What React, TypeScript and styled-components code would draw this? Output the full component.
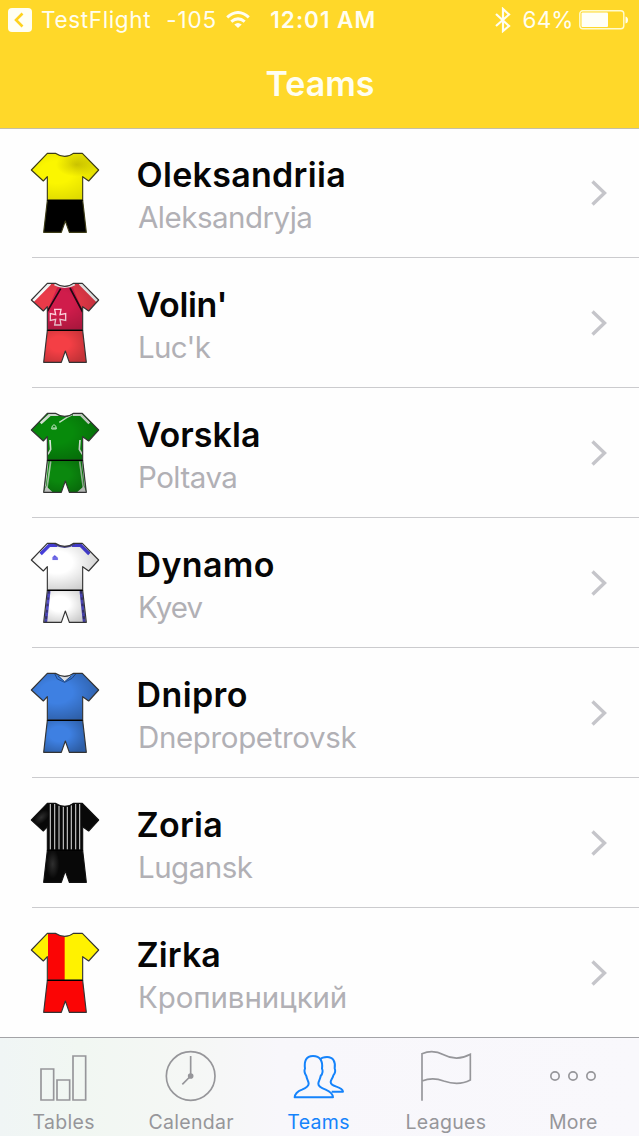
import React from 'react';
import styled, { createGlobalStyle } from 'styled-components';

const GlobalStyle = createGlobalStyle`
  * { box-sizing: border-box; }
  body { margin: 0; background: #fff; font-family: Inter, "Liberation Sans", sans-serif; }
`;

const Screen = styled.div`
  width: 639px;
  height: 1136px;
  display: flex;
  flex-direction: column;
  overflow: hidden;
  background: #fefefe;
`;

const Header = styled.header`
  flex: none;
  height: 129px;
  background: #ffd829;
  border-bottom: 1px solid #c4bfa6;
  color: #fffef0;
`;

const StatusBar = styled.div`
  height: 40px;
  display: flex;
  align-items: center;
  padding-left: 8px;
`;

const StatusText = styled.span<{ $left: number; $spacing: number; $weight?: number }>`
  margin-left: ${(p) => p.$left}px;
  font-size: 22.5px;
  font-weight: ${(p) => p.$weight ?? 400};
  letter-spacing: ${(p) => p.$spacing}px;
  line-height: 42px;
  white-space: nowrap;
`;

const StatusGlyph = styled.svg<{ $left?: number }>`
  flex: none;
  display: block;
  margin-left: ${(p) => p.$left ?? 0}px;
`;

const StatusEnd = styled.div`
  margin-left: auto;
  padding-right: 10px;
  display: flex;
  align-items: center;
`;

const Title = styled.h1`
  margin: 0;
  height: 88px;
  padding-left: 1px;
  line-height: 87px;
  text-align: center;
  font-size: 34px;
  font-weight: 600;
`;

const List = styled.ul`
  flex: 1;
  min-height: 0;
  margin: 0;
  padding: 0;
  list-style: none;
  overflow: hidden;
`;

const Row = styled.li`
  height: 130px;
  margin-left: 32px;
  display: flex;
  align-items: flex-start;
  border-bottom: 1px solid #cbcbce;
  &:first-child { height: 129px; }
  &:first-child > * { margin-top: -1px; }
`;

const KitCell = styled.div`
  width: 105px;
  padding-top: 24px;
  margin-left: -2px;
  svg { display: block; }
`;

const Labels = styled.div`
  flex: 1;
  padding: 25px 0 0 1.5px;
`;

const Name = styled.div<{ $spacing: number }>`
  height: 43px;
  line-height: 44px;
  font-size: 34px;
  font-weight: 600;
  color: #060606;
  white-space: nowrap;
  letter-spacing: ${(p) => p.$spacing}px;
`;

const City = styled.div<{ $spacing: number }>`
  height: 42px;
  line-height: 42px;
  padding-left: 1.5px;
  font-size: 29.5px;
  font-weight: 400;
  color: #b1b0b5;
  white-space: nowrap;
  letter-spacing: ${(p) => p.$spacing}px;
`;

const Chevron = styled.svg`
  flex: none;
  display: block;
  padding-top: 51px;
  box-sizing: content-box;
  margin-right: 31px;
`;

const TabBar = styled.nav`
  flex: none;
  height: 99px;
  display: flex;
  padding-right: 2px;
  border-top: 1px solid #a3a3a7;
  background: linear-gradient(90deg, #f0f5f5 0, #f1f7f2 80px, #f5f7f5 190px, #f8f7fb 280px, #f9f8fc 100%);
`;

const Tab = styled.div<{ $active?: boolean }>`
  flex: 1;
  display: flex;
  flex-direction: column;
  align-items: center;
  padding-top: 11px;
  color: ${(p) => (p.$active ? '#1583fb' : '#96969a')};
  svg { display: block; flex: none; }
`;

const TabLabel = styled.span<{ $spacing: number }>`
  flex: none;
  height: 33px;
  line-height: 38px;
  font-size: 19.5px;
  font-weight: 400;
  letter-spacing: ${(p) => p.$spacing}px;
  white-space: nowrap;
`;

const SHIRT =
  'M82 40 L106 40 Q119 49 134 49 Q149 49 160 40 L187 40 L236 90 L206 123 L188 110 L188 181 L82 181 L82 110 L70 123 L34 90 Z';
const SHORTS = 'M82 181 L188 181 L199 277 L148 277 L136 243 L124 277 L71 277 Z';

type KitProps = {
  id: string;
  shirt: string;
  shorts: string;
  shade?: number;
  line?: string;
  children?: React.ReactNode;
};

function Kit({ id, shirt, shorts, shade = 0, line = '#333', children }: KitProps) {
  return (
    <svg width="70" height="82" viewBox="30 36 210 246">
      <defs>
        <clipPath id={`${id}-clip`}>
          <path d={SHIRT} />
          <path d={SHORTS} />
        </clipPath>
        <radialGradient id={`${id}-shade`} cx="0.38" cy="0.42" r="0.65">
          <stop offset="0.35" stopColor="#000" stopOpacity="0" />
          <stop offset="1" stopColor="#000" stopOpacity={shade} />
        </radialGradient>
      </defs>
      <path d={SHIRT} fill={shirt} />
      <path d={SHORTS} fill={shorts} />
      <g clipPath={`url(#${id}-clip)`}>
        {children}
        <rect x="30" y="36" width="210" height="145" fill={`url(#${id}-shade)`} />
        <rect x="68" y="181" width="134" height="98" fill={`url(#${id}-shade)`} />
      </g>
      <path d={SHIRT} fill="none" stroke={line} strokeWidth="3.4" strokeLinejoin="round" />
      <path d={SHORTS} fill="none" stroke={line} strokeWidth="3.4" strokeLinejoin="round" />
      <path d="M82 181 H188" stroke="#000" strokeWidth="4" />
    </svg>
  );
}

const kits: Record<string, React.ReactNode> = {
  oleksandriia: (
    <Kit id="ole" shirt="#fbf600" shorts="#000" shade={0.12} line="#3c3b16">
      <defs>
        <radialGradient id="ole-fold">
          <stop offset="0" stopColor="#a59a00" stopOpacity="0.5" />
          <stop offset="1" stopColor="#a59a00" stopOpacity="0" />
        </radialGradient>
      </defs>
      <ellipse cx="170" cy="74" rx="62" ry="36" fill="url(#ole-fold)" />
    </Kit>
  ),
  volin: (
    <Kit id="vol" shirt="#ea3a49" shorts="#f43f45" shade={0.2}>
      <path d="M112 52 L158 52 L188 122 V181 H82 V122 Z" fill="#d01c4b" />
      <path d="M122 56 L82 124 M150 54 L188 126" stroke="#200812" strokeWidth="5" fill="none" />
      <path d="M88 38 L36 91 M182 38 L234 91" stroke="#fff" strokeWidth="15" />
      <path d="M104 42 Q134 58 164 42" stroke="#f4eef0" strokeWidth="8" fill="none" />
      <path
        d="M104 118 H123 L120 134 L137 131 V151 L120 148 L123 165 H104 L107 148 L91 151 V131 L107 134 Z"
        fill="none"
        stroke="#ffd3de"
        strokeWidth="4"
      />
    </Kit>
  ),
  vorskla: (
    <Kit id="vor" shirt="#078a0b" shorts="#0b880e" shade={0.22}>
      <path d="M116 44 L90 44 L62 70 M158 44 L182 44 L208 70" fill="none" stroke="#d9e7d9" strokeWidth="8" />
      <path d="M118 67 L140 53 L156 45" stroke="#c0dfc0" strokeWidth="4" fill="none" />
      <path d="M95 87 Q95 76 102 74 Q110 77 109 87 Z M98 84 H108" stroke="#c7e6c7" strokeWidth="3" fill="none" />
      <path d="M90 120 L92 148 L84 163 M180 120 L178 148 L187 163" stroke="#dceadc" strokeWidth="5" fill="none" />
      <path d="M92 184 L81 263 M179 184 L190 263" stroke="#a7cca7" strokeWidth="5" />
      <path d="M71 277 L78 258 L98 277 Z M199 277 L192 258 L171 277 Z" fill="#e5e8e5" />
      <path d="M84 184 L76 260 M187 184 L195 260" stroke="#d5ddd5" strokeWidth="3" />
    </Kit>
  ),
  dynamo: (
    <Kit id="dyn" shirt="#fff" shorts="#fff" shade={0.2}>
      <path d="M62 72 L88 46 L112 46 M208 72 L182 46 L156 46" fill="none" stroke="#4840df" strokeWidth="10" />
      <path d="M104 42 Q134 60 164 42" fill="none" stroke="#4b4891" strokeWidth="6" />
      <path d="M97 90 V82 L104 75 L114 83 V90 Z M97 84 H114" fill="#5c55df" stroke="#d7d5ff" strokeWidth="1" />
      <path d="M87 183 L77 277 M183 183 L193 277" stroke="#544ecb" strokeWidth="9" />
      <path d="M87 183 L77 277 M183 183 L193 277" stroke="#3d3879" strokeWidth="6" strokeDasharray="8 11" />
    </Kit>
  ),
  dnipro: (
    <Kit id="dni" shirt="#3e80e2" shorts="#3e80e2" shade={0.27}>
      <path d="M113 43 L134 65 L157 43 Z" fill="#e7eaef" />
      <path d="M104 41 L112 57 L134 67 L156 55 L167 42 M114 48 L134 65 L153 49" fill="none" stroke="#234d8d" strokeWidth="3" />
    </Kit>
  ),
  zoria: (
    <Kit id="zor" shirt="#080808" shorts="#080808" line="#111">
      <defs>
        <radialGradient id="zor-glow">
          <stop offset="0" stopColor="#777" stopOpacity="0.35" />
          <stop offset="1" stopColor="#777" stopOpacity="0" />
        </radialGradient>
      </defs>
      <path
        d="M91 42 V179 M104 42 V179 M117 47 V179 M130 50 V179 M142 50 V179 M154 46 V179 M167 42 V179 M179 42 V179"
        stroke="#c9c9c9"
        strokeWidth="3.4"
      />
      <ellipse cx="64" cy="82" rx="28" ry="16" fill="url(#zor-glow)" transform="rotate(-42 64 82)" />
      <ellipse cx="98" cy="222" rx="20" ry="44" fill="url(#zor-glow)" />
    </Kit>
  ),
  zirka: (
    <Kit id="zir" shirt="#fff200" shorts="#fb0505">
      <rect x="84" y="36" width="50" height="145" fill="#fb0505" />
    </Kit>
  ),
};

const teams = [
  { kit: 'oleksandriia', name: 'Oleksandriia', city: 'Aleksandryja', ns: 0.3, cs: -0.5 },
  { kit: 'volin', name: "Volin'", city: "Luc'k", ns: -0.3, cs: -0.65 },
  { kit: 'vorskla', name: 'Vorskla', city: 'Poltava', ns: 0.1, cs: -0.5 },
  { kit: 'dynamo', name: 'Dynamo', city: 'Kyev', ns: 0.35, cs: -0.9 },
  { kit: 'dnipro', name: 'Dnipro', city: 'Dnepropetrovsk', ns: 0.4, cs: -0.36 },
  { kit: 'zoria', name: 'Zoria', city: 'Lugansk', ns: 0.3, cs: -0.5 },
  { kit: 'zirka', name: 'Zirka', city: 'Кропивницкий', ns: 0.1, cs: -0.1 },
];

type IconProps = { x: number; y?: number; children: React.ReactNode };
const TabIcon = ({ x, y = 57, children }: IconProps) => (
  <svg width="54" height="54" viewBox={`${x} ${y} 162 162`} fill="none" stroke="currentColor" strokeWidth="5">
    {children}
  </svg>
);

const tabs = [
  {
    label: 'Tables',
    spacing: 0.3,
    icon: (
      <TabIcon x={110}>
        <path d="M122 117 H160 V210 H122 Z M170 150 H208 V210 H170 Z M218 78 H256 V210 H218 Z" />
      </TabIcon>
    ),
  },
  {
    label: 'Calendar',
    spacing: 0.3,
    icon: (
      <TabIcon x={492}>
        <circle cx="572" cy="138" r="73" />
        <path d="M572 78 V138 L547 163" />
        <circle cx="572" cy="138" r="6" fill="currentColor" />
      </TabIcon>
    ),
  },
  {
    label: 'Teams',
    spacing: 0.3,
    active: true,
    icon: (
      <TabIcon x={875}>
        <path
          strokeWidth="6"
          strokeLinejoin="round"
          d="M883 202 H998 C997 190 988 184 976 179 C963 174 954 169 954 161 C954 153 959 150 961 138 C966 132 968 122 965 116 C968 94 960 78 938 78 C917 78 911 94 914 116 C911 122 914 132 918 138 C920 150 925 153 925 161 C925 169 916 174 905 179 C892 184 884 190 883 202 Z"
        />
        <path
          strokeWidth="6"
          strokeLinejoin="round"
          d="M960 88 C964 83 972 81 980 81 C999 81 1006 96 1003 115 C1006 122 1004 130 999 136 C997 146 991 149 991 156 C991 164 999 167 1008 170 C1020 174 1027 178 1028 185 H994"
        />
      </TabIcon>
    ),
  },
  {
    label: 'Leagues',
    spacing: 0.3,
    icon: (
      <TabIcon x={298}>
        <path
          strokeWidth="5"
          d="M307 212 V71 C329 62 352 64 372 74 C398 88 428 86 452 73 V150 C428 163 398 162 372 153 C352 145 329 144 307 153"
        />
      </TabIcon>
    ),
  },
  {
    label: 'More',
    spacing: 0.3,
    icon: (
      <TabIcon x={678}>
        <circle cx="705" cy="138" r="12.5" />
        <circle cx="759" cy="138" r="12.5" />
        <circle cx="813" cy="138" r="12.5" />
      </TabIcon>
    ),
  },
];

export default function App() {
  return (
    <Screen>
      <GlobalStyle />
      <Header>
        <StatusBar>
          <StatusGlyph width="24" height="24" viewBox="0 0 24 24">
            <rect width="24" height="24" rx="4" fill="#fffff4" />
            <path d="M14.5 5.5 L8 12 L14.5 18.5" fill="none" stroke="#ffd21f" strokeWidth="2.6" />
          </StatusGlyph>
          <StatusText $left={9} $spacing={0.65}>TestFlight</StatusText>
          <StatusText $left={15} $spacing={0.8}>-105</StatusText>
          <StatusGlyph $left={9} width="24" height="18" viewBox="0 0 24 18" fill="none" stroke="#fffef0" strokeWidth="3">
            <path d="M1.2 6.3 Q12 -3.2 22.8 6.3" />
            <path d="M5.3 10.7 Q12 5 18.7 10.7" />
            <path d="M12 17 L8.3 13.4 Q12 10.4 15.7 13.4 Z" fill="#fffef0" stroke="none" />
          </StatusGlyph>
          <StatusText $left={20.5} $spacing={1} $weight={600}>12:01 AM</StatusText>
          <StatusEnd>
            <StatusGlyph width="16" height="26" viewBox="0 0 16 26" fill="none" stroke="#fffef0" strokeWidth="2.2">
              <path d="M1 7 L14 19 L8 24 V2 L14 7.5 L1 19" />
            </StatusGlyph>
            <StatusText $left={12} $spacing={0.1}>64%</StatusText>
            <StatusGlyph $left={5.5} width="50" height="20" viewBox="0 0 50 20">
              <rect x="0.8" y="0.8" width="44" height="18" rx="3" fill="none" stroke="#fffbd0" strokeWidth="1.4" />
              <rect x="2.5" y="2.5" width="26.5" height="14.5" rx="1" fill="#fffff6" />
              <path d="M46.5 6.5 Q49 7 49 10 Q49 13 46.5 13.5 Z" fill="#fffef0" />
            </StatusGlyph>
          </StatusEnd>
        </StatusBar>
        <Title>Teams</Title>
      </Header>
      <List>
        {teams.map((t) => (
          <Row key={t.name}>
            <KitCell>{kits[t.kit]}</KitCell>
            <Labels>
              <Name $spacing={t.ns}>{t.name}</Name>
              <City $spacing={t.cs}>{t.city}</City>
            </Labels>
            <Chevron width="18" height="28" viewBox="0 0 18 28" fill="none" stroke="#c5c5ca" strokeWidth="3.4">
              <path d="M2.5 2.5 L14.5 14 L2.5 25.5" />
            </Chevron>
          </Row>
        ))}
      </List>
      <TabBar>
        {tabs.map((t) => (
          <Tab key={t.label} $active={t.active}>
            {t.icon}
            <TabLabel $spacing={t.spacing}>{t.label}</TabLabel>
          </Tab>
        ))}
      </TabBar>
    </Screen>
  );
}
